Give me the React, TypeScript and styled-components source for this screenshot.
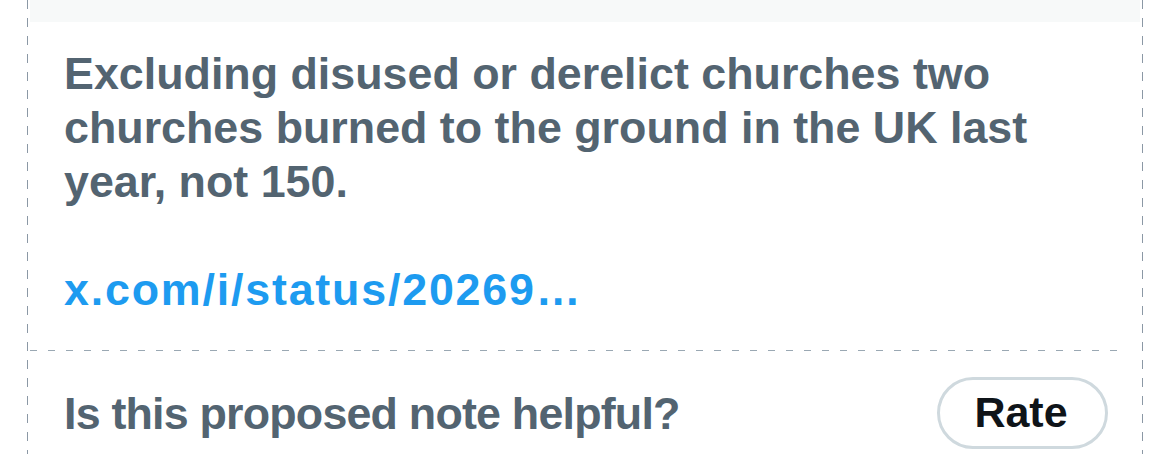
import styled, { createGlobalStyle } from "styled-components";

const GlobalStyle = createGlobalStyle`
  html, body {
    margin: 0;
    padding: 0;
    background: #ffffff;
  }
  body {
    font-family: "Liberation Sans", Arial, sans-serif;
    -webkit-font-smoothing: antialiased;
  }
`;

// dashed edges drawn as gradients so the dash length can match the capture
const Frame = styled.div`
  box-sizing: border-box;
  margin-left: 27px;
  width: 1116px;
  min-height: 100vh;
  padding: 0 3px;
  overflow: hidden;
  background:
    repeating-linear-gradient(to bottom, #8b98a5 0 9px, transparent 9px 18px) left top / 1px 100% no-repeat,
    repeating-linear-gradient(to bottom, #8b98a5 0 9px, transparent 9px 18px) right top / 1px 100% no-repeat;
`;

const TopBand = styled.div`
  height: 22px;
  background: #f7f9f9;
`;

const NoteBody = styled.div`
  padding: 24px 32px 34px 34px;
`;

const NoteText = styled.p`
  margin: 0;
  font-size: 44.8px;
  line-height: 54px;
  font-weight: 700;
  color: #536471;
  white-space: pre-wrap;
  word-wrap: break-word;
`;

const NoteLink = styled.a`
  color: #1d9bf0;
  text-decoration: none;
  letter-spacing: 1.8px;
`;

const Divider = styled.div`
  height: 1px;
  margin-right: 14px;
  background: repeating-linear-gradient(to right, #9aa8b3 0 7px, transparent 7px 18px);
`;

const RateRow = styled.div`
  display: flex;
  align-items: center;
  justify-content: space-between;
  padding: 26px 32px 0 34px;
`;

const Question = styled.span`
  font-size: 44.8px;
  line-height: 54px;
  font-weight: 700;
  letter-spacing: -0.8px;
  color: #536471;
`;

const RateButton = styled.button`
  box-sizing: border-box;
  height: 72px;
  width: 171px;
  border: 3px solid #cfd9de;
  border-radius: 36px;
  background: #ffffff;
  color: #0f1419;
  font-family: inherit;
  font-size: 43px;
  font-weight: 700;
  line-height: 1;
  padding: 0 3px 2px 0;
  cursor: pointer;
`;

export default function App() {
  return (
    <>
      <GlobalStyle />
      <Frame>
        <TopBand />
        <NoteBody>
          <NoteText>
            {"Excluding disused or derelict churches two churches burned to the ground in the UK last year, not 150.\n\n"}
            <NoteLink href="#">x.com/i/status/20269…</NoteLink>
          </NoteText>
        </NoteBody>
        <Divider />
        <RateRow>
          <Question>Is this proposed note helpful?</Question>
          <RateButton>Rate</RateButton>
        </RateRow>
      </Frame>
    </>
  );
}
